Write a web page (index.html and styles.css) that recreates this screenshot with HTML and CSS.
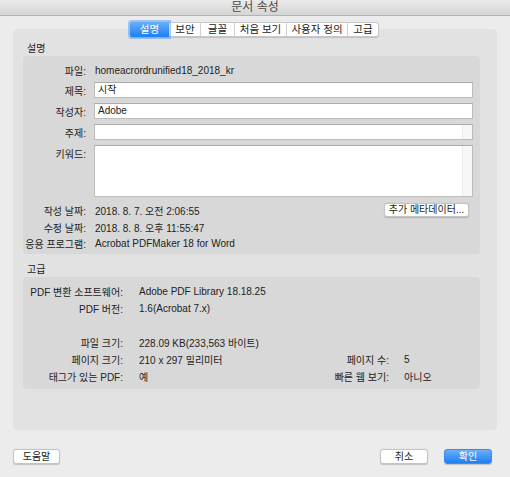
FILE: index.html
```html
<!DOCTYPE html>
<html lang="ko">
<head>
<meta charset="utf-8">
<title>문서 속성</title>
<link rel="stylesheet" href="styles.css">
</head>
<body>
<div class="window">
  <div class="titlebar">문서 속성</div>
  <div class="main">
    <div class="tabs">
      <div class="tab selected">설명</div>
      <div class="tab">보안</div>
      <div class="tab">글꼴</div>
      <div class="tab">처음 보기</div>
      <div class="tab">사용자 정의</div>
      <div class="tab">고급</div>
    </div>
    <div class="tabbox">
      <div class="section-title">설명</div>
      <div class="panel desc">
        <div class="row r-file"><span class="label">파일:</span><span class="value">homeacrordrunified18_2018_kr</span></div>
        <div class="row r-input"><span class="label">제목:</span><div class="field">시작</div></div>
        <div class="row r-input"><span class="label">작성자:</span><div class="field">Adobe</div></div>
        <div class="row r-input"><span class="label">주제:</span><div class="field scroll"><span class="sb"></span></div></div>
        <div class="row r-area"><span class="label">키워드:</span><div class="field area scroll"><span class="sb"></span></div></div>
        <div class="row r-created"><span class="label">작성 날짜:</span><span class="value">2018. 8. 7. 오전 2:06:55</span><button class="btn meta">추가 메타데이터...</button></div>
        <div class="row r-mod"><span class="label">수정 날짜:</span><span class="value">2018. 8. 8. 오후 11:55:47</span></div>
        <div class="row r-app"><span class="label">응용 프로그램:</span><span class="value">Acrobat PDFMaker 18 for Word</span></div>
      </div>
      <div class="section-title adv-title">고급</div>
      <div class="panel adv">
        <span class="alabel">PDF 변환 소프트웨어:</span><span class="aval wide">Adobe PDF Library 18.18.25</span>
        <span class="alabel">PDF 버전:</span><span class="aval wide">1.6(Acrobat 7.x)</span>
        <span class="alabel"></span><span class="aval wide"></span>
        <span class="alabel">파일 크기:</span><span class="aval wide">228.09 KB(233,563 바이트)</span>
        <span class="alabel">페이지 크기:</span><span class="aval">210 x 297 밀리미터</span><span class="alabel2">페이지 수:</span><span class="aval">5</span>
        <span class="alabel">태그가 있는 PDF:</span><span class="aval">예</span><span class="alabel2">빠른 웹 보기:</span><span class="aval">아니오</span>
      </div>
    </div>
    <div class="footer">
      <button class="btn help">도움말</button>
      <div class="spacer"></div>
      <button class="btn cancel">취소</button>
      <button class="btn primary">확인</button>
    </div>
  </div>
</div>
</body>
</html>
```

FILE: styles.css
```css
* { box-sizing: border-box; }
html, body {
  margin: 0;
  padding: 0;
  width: 510px;
  height: 477px;
  overflow: hidden;
  background: #ececec;
  font-family: "Liberation Sans", "Noto Sans CJK KR", sans-serif;
  font-size: 10px;
  color: #222;
}
.window { width: 510px; height: 477px; }
.titlebar {
  height: 16px;
  background: linear-gradient(#ebebeb, #d5d5d5);
  border-bottom: 1px solid #b3b3b3;
  text-align: center;
  font-size: 12px;
  line-height: 15px;
  color: #4a4a4a;
}
.main { padding: 0 13px; }
.tabs {
  position: relative;
  z-index: 1;
  margin: 6px auto 0 117px;
  display: flex;
  width: 249px;
  height: 15px;
  background: #fff;
  border: 1px solid #c8c8c8;
  border-radius: 3px;
  box-shadow: 0 0.5px 1px rgba(0,0,0,0.15);
}
.tab {
  height: 13px;
  line-height: 13px;
  text-align: center;
  font-size: 10.5px;
  color: #222;
  border-left: 1px solid #d0d0d0;
}
.tab:nth-child(1) { width: 38px; border-left: none; }
.tab:nth-child(2) { width: 31px; }
.tab:nth-child(3) { width: 34px; }
.tab:nth-child(4) { width: 52px; }
.tab:nth-child(5) { width: 61px; }
.tab:nth-child(6) { flex: 1; }
.tab.selected {
  background: linear-gradient(#6aaefa, #1f7ff1);
  color: #fff;
  border-radius: 2px 0 0 2px;
  margin: -1px 0 -1px -1px;
  height: 15px;
  line-height: 15px;
  width: 39px;
  box-shadow: 0 0 0 2px rgba(90,160,245,0.55);
}
.tabbox {
  margin-top: -8px;
  height: 401px;
  background: #e2e2e2;
  border-radius: 4px;
  padding: 13px 17px 0 10px;
}
.section-title {
  height: 13px;
  line-height: 13px;
  padding-left: 4px;
  font-size: 10px;
  color: #222;
}
.panel {
  margin-top: 1px;
  background: #d8d8d8;
  border-radius: 4px;
}
.desc {
  height: 198px;
  padding: 7px 7px 0 0;
  display: flex;
  flex-direction: column;
}
.row { display: flex; align-items: center; }
.label {
  width: 63px;
  flex: none;
  text-align: right;
  color: #222;
  white-space: nowrap;
}
.value { margin-left: 9px; white-space: nowrap; }
.r-file { height: 14px; }
.r-input { height: 16px; margin-top: 5px; }
.r-area { height: 52px; margin-top: 5px; align-items: flex-start; }
.r-area .label { padding-top: 1px; }
.r-created { height: 14px; margin-top: 6px; }
.r-mod { height: 14px; margin-top: 3px; }
.r-app { height: 14px; margin-top: 2px; }
.field {
  position: relative;
  margin-left: 8px;
  flex: 1;
  height: 16px;
  background: #fff;
  border: 1px solid #bcbcbc;
  border-top-color: #acacac;
  padding-left: 3px;
  line-height: 14px;
}
.field.area { height: 52px; }
.sb {
  position: absolute;
  right: 0;
  top: 0;
  bottom: 0;
  width: 10px;
  background: #f7f7f7;
  border-left: 1px solid #ececec;
}
.btn {
  font-family: inherit;
  font-size: 10px;
  color: #222;
  background: #fff;
  border: 1px solid #c4c4c4;
  border-radius: 3px;
  box-shadow: 0 0.5px 1px rgba(0,0,0,0.18);
  padding: 0;
  height: 14px;
  line-height: 12px;
}
.meta { margin-left: auto; margin-right: 4px; width: 85px; }
.adv-title { margin-top: 9px; }
.adv {
  height: 112px;
  padding: 6px 0 0 0;
  display: grid;
  grid-template-columns: 116px 170px 95px 1fr;
  grid-auto-rows: 17px;
  align-items: center;
}
.alabel, .alabel2 {
  text-align: right;
  white-space: nowrap;
}
.alabel { padding-right: 16px; grid-column: 1; }
.alabel2 { padding-right: 15px; }
.aval { white-space: nowrap; }
.aval.wide { grid-column: 2 / 5; }
.footer {
  display: flex;
  margin-top: 19px;
  padding-right: 5px;
}
.spacer { flex: 1; }
.help { width: 47px; height: 15px; }
.cancel { width: 48px; height: 15px; }
.primary {
  width: 48px;
  height: 15px;
  margin-left: 16px;
  color: #fff;
  background: linear-gradient(#6aaefa, #1f7ff1);
  border-color: #3b8cf2;
}
```
